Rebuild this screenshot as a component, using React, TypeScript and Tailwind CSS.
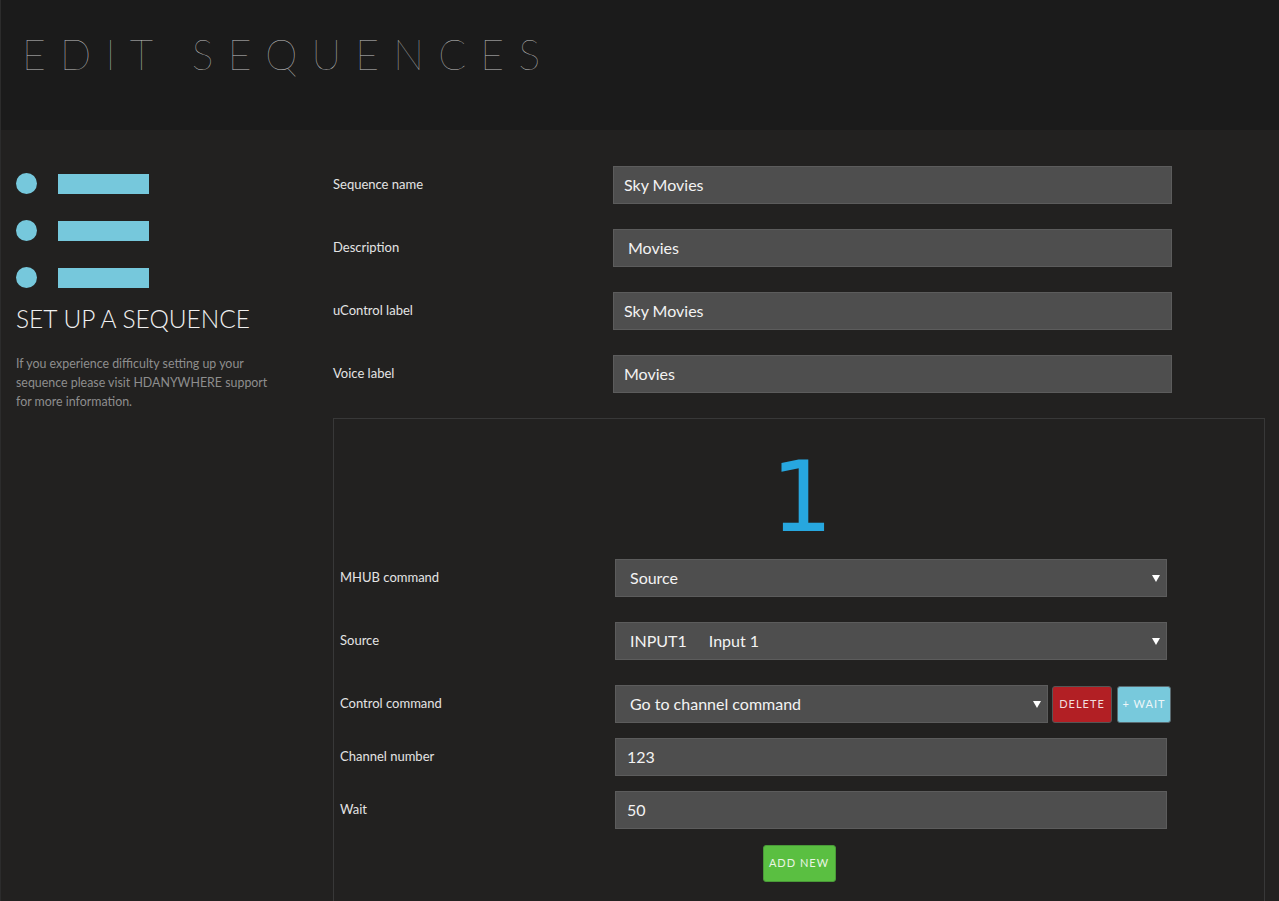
import React from 'react';

const font = { fontFamily: 'Lato, "Open Sans", sans-serif' };

function Caret() {
  return (
    <svg width="8" height="7" viewBox="0 0 8 7" className="shrink-0">
      <polygon points="0,0 8,0 4,7" fill="#ffffff" />
    </svg>
  );
}

function TextBox({ value, pl = 'pl-[10px]', w = 'w-[559px]' }: { value: string; pl?: string; w?: string }) {
  return (
    <div
      className={`flex h-[38px] ${w} items-center border border-[#5c5c5c] bg-[#4e4e4e] ${pl} text-[16px] text-[#f3f3f3]`}
    >
      {value}
    </div>
  );
}

function SelectBox({ children, w = 'w-[552px]' }: { children: React.ReactNode; w?: string }) {
  return (
    <div
      className={`flex h-[38px] ${w} items-center justify-between border border-[#5c5c5c] bg-[#4e4e4e] pl-[14px] pr-[6px] text-[16px] text-[#f3f3f3]`}
    >
      <div className="flex items-center">{children}</div>
      <Caret />
    </div>
  );
}

function Row({ label, children, outer }: { label: string; children: React.ReactNode; outer?: boolean }) {
  return (
    <div className="flex items-center">
      <div className={`${outer ? 'w-[280px]' : 'w-[275px]'} text-[13px] text-[#e4e4e4]`}>{label}</div>
      {children}
    </div>
  );
}

export default function App() {
  return (
    <div className="min-h-[901px] w-full border-l border-[#2c2c2c] bg-[#222120]" style={font}>
      <header className="h-[130px] bg-[#1b1b1b] pl-[21px] pt-[30px]">
        <h1 className="text-[41px] font-thin leading-[50px] tracking-[14.2px] text-[#c2c2c2]">EDIT SEQUENCES</h1>
      </header>

      <div className="flex">
        <aside className="w-[332px] shrink-0 pl-[15px] pt-[43px]">
          <div className="flex flex-col gap-[26px]">
            {[0, 1, 2].map((i) => (
              <div key={i} className="flex items-center gap-[21px]">
                <div className="h-[21px] w-[21px] rounded-full bg-[#76c8dc]" />
                <div className="h-[20px] w-[91px] bg-[#76c8dc]" />
              </div>
            ))}
          </div>
          <h2 className="mt-[16px] text-[24.5px] font-light leading-[30px] text-[#f0f0f0]">SET UP A SEQUENCE</h2>
          <p className="mt-[20px] w-[262px] text-[12.4px] leading-[19px] text-[#8e8e8e]">
            If you experience difficulty setting up your sequence please visit HDANYWHERE support for more
            information.
          </p>
        </aside>

        <main className="w-[932px] pt-[36px]">
          <div className="flex flex-col gap-[25px]">
            <Row label="Sequence name" outer>
              <TextBox value="Sky Movies" />
            </Row>
            <Row label="Description" outer>
              <TextBox value="Movies" pl="pl-[14px]" />
            </Row>
            <Row label="uControl label" outer>
              <TextBox value="Sky Movies" />
            </Row>
            <Row label="Voice label" outer>
              <TextBox value="Movies" />
            </Row>
          </div>

          <section className="mt-[25px] h-[500px] border border-[#383838] pl-[6px] pt-[29px]">
            <div className="h-[98px] text-center text-[98px] leading-none text-[#27a7df]" style={{ fontFamily: '"DejaVu Sans", sans-serif' }}>
              1
            </div>
            <div className="mt-[13px] flex flex-col">
              <Row label="MHUB command">
                <SelectBox>Source</SelectBox>
              </Row>
              <div className="mt-[25px]">
                <Row label="Source">
                  <SelectBox>
                    <span>INPUT1</span>
                    <span className="ml-[22px]">Input 1</span>
                  </SelectBox>
                </Row>
              </div>
              <div className="mt-[25px]">
                <Row label="Control command">
                  <div className="flex items-center gap-[4px]">
                    <SelectBox w="w-[433px]">Go to channel command</SelectBox>
                    <button className="h-[37px] w-[60px] rounded-[3px] border border-[#555] bg-[#b21f24] text-[11px] tracking-[1px] text-[#f1dede]">
                      DELETE
                    </button>
                    <button className="ml-[1px] h-[37px] w-[54px] rounded-[3px] border border-[#5a6a70] bg-[#78c9dc] text-[11px] tracking-[1px] text-[#eef6f8]">
                      + WAIT
                    </button>
                  </div>
                </Row>
              </div>
              <div className="mt-[15px]">
                <Row label="Channel number">
                  <TextBox value="123" pl="pl-[11px]" w="w-[552px]" />
                </Row>
              </div>
              <div className="mt-[15px]">
                <Row label="Wait">
                  <TextBox value="50" pl="pl-[11px]" w="w-[552px]" />
                </Row>
              </div>
              <div className="mt-[16px] flex justify-center pr-[6px]">
                <button className="h-[37px] w-[73px] rounded-[3px] border border-[#4a9a38] bg-[#5abf41] text-[11px] tracking-[1px] text-[#eaf5e4]">
                  ADD NEW
                </button>
              </div>
            </div>
          </section>
        </main>
      </div>
    </div>
  );
}
